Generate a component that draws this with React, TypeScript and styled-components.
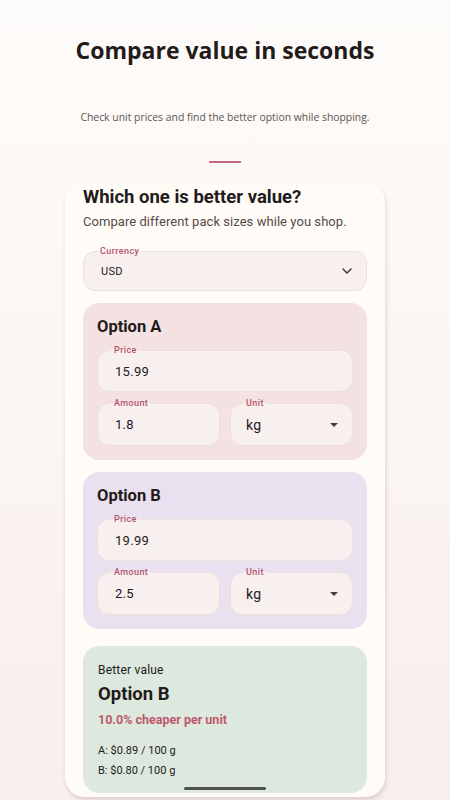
import React from "react";
import styled, { createGlobalStyle } from "styled-components";

const GlobalStyle = createGlobalStyle`
  html, body {
    margin: 0;
    padding: 0;
  }
  body {
    font-family: Roboto, "Noto Sans", sans-serif;
    color: #231a1a;
  }
`;

const Page = styled.div`
  min-height: 100vh;
  height: 800px;
  overflow: hidden;
  background: linear-gradient(180deg, #fdfbf9 0%, #fbf6f4 45%, #f8eeed 100%);
  display: flex;
  flex-direction: column;
  align-items: center;
  padding-top: 36px;
  box-sizing: border-box;
  position: relative;
`;

const Title = styled.h1`
  margin: 0;
  font-family: "Open Sans", "Noto Sans", sans-serif;
  font-weight: 700;
  font-size: 23px;
  line-height: 28px;
  color: #231a1a;
`;

const Lead = styled.p`
  margin: 45px 0 0;
  font-family: "Open Sans", "Noto Sans", sans-serif;
  font-size: 10.4px;
  line-height: 16px;
  color: #5e5454;
`;

const Accent = styled.div`
  margin-top: 36px;
  width: 32px;
  height: 2px;
  background: #c9697c;
`;

const Card = styled.section`
  margin-top: 19px;
  width: 320px;
  box-sizing: border-box;
  padding: 4px 18px 4px;
  background: #fffcf7;
  border-radius: 20px;
  box-shadow: 1px 3px 4px rgba(140, 100, 100, 0.22);
  display: flex;
  flex-direction: column;
`;

const CardTitle = styled.h2`
  margin: 0;
  font-size: 18.5px;
  line-height: 22px;
  font-weight: 700;
  color: #231a1a;
`;

const CardText = styled.p`
  margin: 4px 0 0;
  font-size: 13px;
  line-height: 20px;
  letter-spacing: 0.05px;
  color: #554a4a;
`;

const Field = styled.div<{ $height: number; $pad?: number }>`
  position: relative;
  height: ${(p) => p.$height}px;
  box-sizing: border-box;
  padding: 0 14px 0 ${(p) => p.$pad ?? 17}px;
  background: #f8f0ef;
  border: 1px solid #ecdfdc;
  border-radius: 12px;
  display: flex;
  align-items: center;
  justify-content: space-between;
  min-width: 0;
`;

const FieldLabel = styled.span<{ $left: number; $outer: string }>`
  position: absolute;
  top: -7px;
  left: ${(p) => p.$left}px;
  padding: 0 3px;
  font-size: 9px;
  line-height: 12px;
  font-weight: 500;
  letter-spacing: 0.4px;
  color: #b4546b;
  background: linear-gradient(180deg, ${(p) => p.$outer} 50%, #f8f0ef 50%);
`;

const FieldValue = styled.span<{ $size?: number }>`
  font-size: ${(p) => p.$size ?? 13}px;
  letter-spacing: 0.3px;
  color: #231a1a;
`;

const CurrencyField = styled(Field)`
  margin-top: 19px;
`;

const Panel = styled.div<{ $bg: string; $gap: number }>`
  margin-top: ${(p) => p.$gap}px;
  background: ${(p) => p.$bg};
  border-radius: 16px;
  padding: 14px 14px 14px;
  display: flex;
  flex-direction: column;
`;

const PanelTitle = styled.h3`
  margin: 0 0 13px;
  font-size: 16.5px;
  line-height: 20px;
  font-weight: 700;
  color: #231a1a;
`;

const Row = styled.div`
  margin-top: 11px;
  display: grid;
  grid-template-columns: 1fr 1fr;
  gap: 10px;
`;

const ResultPanel = styled.div`
  margin-top: 17px;
  background: #dde8de;
  border-radius: 16px;
  padding: 16px 15px 14px;
  display: flex;
  flex-direction: column;
`;

const ResultLabel = styled.div`
  font-size: 12px;
  line-height: 16px;
  letter-spacing: 0.2px;
  color: #231a1a;
`;

const ResultTitle = styled.div`
  margin-top: 5px;
  font-size: 18.5px;
  line-height: 22px;
  font-weight: 700;
  color: #231a1a;
`;

const Savings = styled.div`
  margin-top: 7px;
  font-size: 12.5px;
  line-height: 16px;
  font-weight: 700;
  color: #c0586d;
`;

const UnitLine = styled.div<{ $gap: number }>`
  margin-top: ${(p) => p.$gap}px;
  font-size: 11px;
  line-height: 16px;
  letter-spacing: 0;
  color: #231a1a;
`;

const HomeBar = styled.div`
  position: absolute;
  bottom: 10px;
  left: 50%;
  transform: translateX(-50%);
  width: 82px;
  height: 3px;
  border-radius: 2px;
  background: #4d504d;
`;

const Chevron = () => (
  <svg width="10" height="6" viewBox="0 0 10 6" fill="none">
    <path d="M1 1 5 5 9 1" stroke="#3a3030" strokeWidth="1.4" strokeLinecap="round" strokeLinejoin="round" />
  </svg>
);

const Caret = () => (
  <svg width="8" height="4" viewBox="0 0 8 4">
    <path d="M0 0h8L4 4z" fill="#453c3c" />
  </svg>
);

type OptionProps = {
  name: string;
  bg: string;
  gap: number;
  price: string;
  amount: string;
  unit: string;
};

const OptionPanel = ({ name, bg, gap, price, amount, unit }: OptionProps) => (
  <Panel $bg={bg} $gap={gap}>
    <PanelTitle>{name}</PanelTitle>
    <Field $height={42}>
      <FieldLabel $left={13} $outer={bg}>Price</FieldLabel>
      <FieldValue>{price}</FieldValue>
    </Field>
    <Row>
      <Field $height={43}>
        <FieldLabel $left={13} $outer={bg}>Amount</FieldLabel>
        <FieldValue>{amount}</FieldValue>
      </Field>
      <Field $height={43} $pad={15}>
        <FieldLabel $left={12} $outer={bg}>Unit</FieldLabel>
        <FieldValue $size={14}>{unit}</FieldValue>
        <Caret />
      </Field>
    </Row>
  </Panel>
);

export default function App() {
  return (
    <>
      <GlobalStyle />
      <Page>
        <Title>Compare value in seconds</Title>
        <Lead>Check unit prices and find the better option while shopping.</Lead>
        <Accent />
        <Card>
          <CardTitle>Which one is better value?</CardTitle>
          <CardText>Compare different pack sizes while you shop.</CardText>
          <CurrencyField $height={40}>
            <FieldLabel $left={13} $outer="#fffcf7">Currency</FieldLabel>
            <FieldValue $size={11}>USD</FieldValue>
            <Chevron />
          </CurrencyField>
          <OptionPanel name="Option A" bg="#f4e2e2" gap={12} price="15.99" amount="1.8" unit="kg" />
          <OptionPanel name="Option B" bg="#e9e1ef" gap={12} price="19.99" amount="2.5" unit="kg" />
          <ResultPanel>
            <ResultLabel>Better value</ResultLabel>
            <ResultTitle>Option B</ResultTitle>
            <Savings>10.0% cheaper per unit</Savings>
            <UnitLine $gap={15}>A: $0.89 / 100 g</UnitLine>
            <UnitLine $gap={4}>B: $0.80 / 100 g</UnitLine>
          </ResultPanel>
        </Card>
        <HomeBar />
      </Page>
    </>
  );
}
